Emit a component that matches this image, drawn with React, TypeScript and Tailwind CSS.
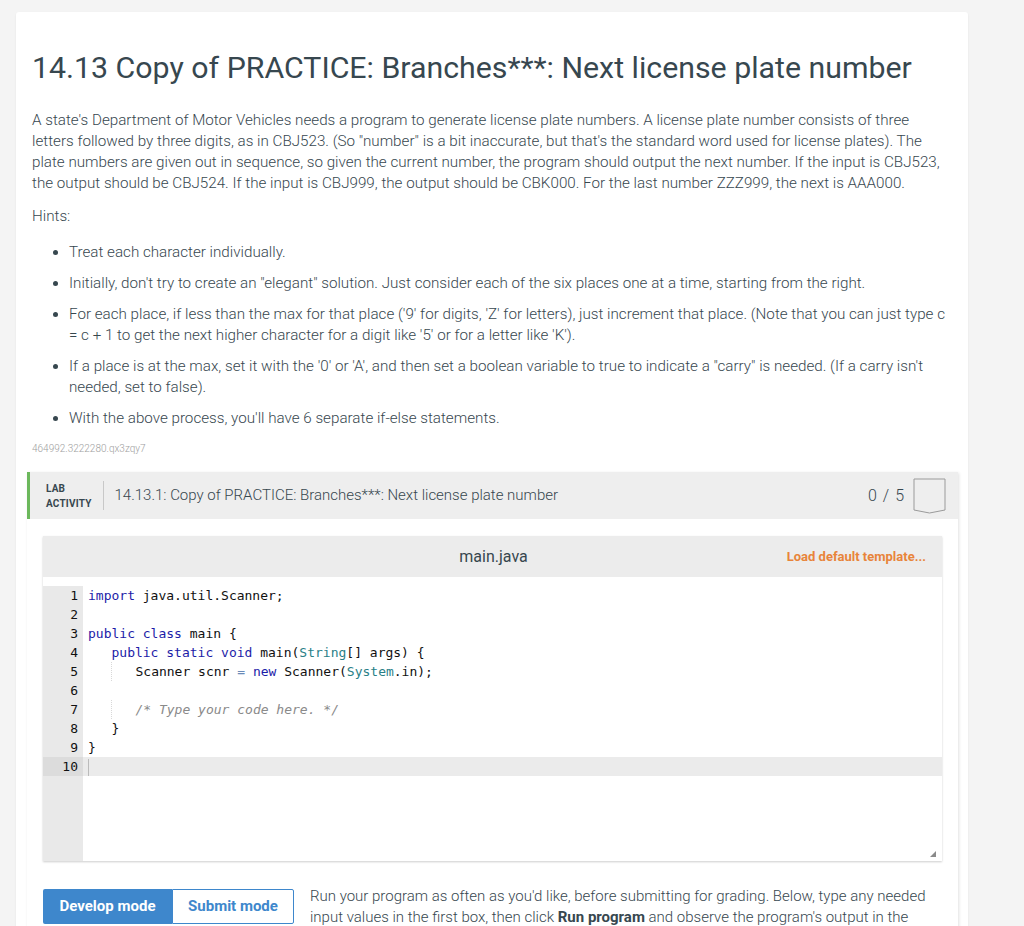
import React from 'react';

const kw = 'text-[#1c1ca8]';
const ty = 'text-[#2a7f87]';

const CodeLine: React.FC<{ n: number; active?: boolean; children?: React.ReactNode }> = ({ n, active, children }) => (
  <div className={`flex h-[19px] items-center ${active ? 'bg-[#ebebeb]' : ''}`}>
    <div className={`w-[40px] shrink-0 h-full pr-[5px] text-right leading-[19px] ${active ? 'bg-[#dcdcdc]' : 'bg-[#e9e9e9]'}`}>
      {n}
    </div>
    <div className="pl-[5px] whitespace-pre leading-[19px] relative h-full flex-1">{children}</div>
  </div>
);

const Guide = () => <span className="inline-block w-[24px] h-[19px] align-top border-l border-dotted border-[#d8d8d8]" />;

export default function App() {
  const hints = [
    'Treat each character individually.',
    'Initially, don\'t try to create an "elegant" solution. Just consider each of the six places one at a time, starting from the right.',
    "For each place, if less than the max for that place ('9' for digits, 'Z' for letters), just increment that place. (Note that you can just type c = c + 1 to get the next higher character for a digit like '5' or for a letter like 'K').",
    'If a place is at the max, set it with the \'0\' or \'A\', and then set a boolean variable to true to indicate a "carry" is needed. (If a carry isn\'t needed, set to false).',
    "With the above process, you'll have 6 separate if-else statements.",
  ];

  return (
    <div className="min-h-[926px] bg-[#f4f4f4] pt-[12px] font-['Roboto',sans-serif]">
      <div className="ml-[16px] w-[952px] bg-white rounded-[3px] shadow-[0_1px_2px_rgba(0,0,0,0.08)] pt-[38px] pb-10">
        <h1 className="px-4 text-[30.3px] leading-[36px] text-[#37474f] font-normal">
          14.13 Copy of PRACTICE: Branches***: Next license plate number
        </h1>
        <div className="pl-4 pr-[20px] mt-[24px] text-[15.2px] leading-[21px] font-light text-[#37474f]">
          <p>
            A state's Department of Motor Vehicles needs a program to generate license plate numbers. A license plate number consists of three letters followed by three digits, as in CBJ523. (So "number" is a bit inaccurate, but that's the standard word used for license plates). The plate numbers are given out in sequence, so given the current number, the program should output the next number. If the input is CBJ523, the output should be CBJ524. If the input is CBJ999, the output should be CBK000. For the last number ZZZ999, the next is AAA000.
          </p>
          <p className="mt-[12px]">Hints:</p>
          <ul className="mt-[15px] pl-[37px] list-disc marker:text-[#37474f]">
            {hints.map((h, i) => (
              <li key={i} className="mb-[10px]">{h}</li>
            ))}
          </ul>
          <div className="mt-[14px] text-[10px] leading-[12px] text-[#9e9e9e]">464992.3222280.qx3zqy7</div>
        </div>

        <div className="mt-[17px] ml-[11px] mr-[10px] shadow-[1px_1px_3px_rgba(0,0,0,0.12)]">
          <div className="h-[47px] bg-[#eeeeee] border-l-[3px] border-[#6cb85c] flex items-center pl-[16px] pr-[12px]">
            <div className="text-[10px] leading-[15px] font-bold text-[#37474f] tracking-[0.2px]">
              LAB
              <br />
              ACTIVITY
            </div>
            <div className="w-px h-[29px] bg-[#c8c8c8] ml-[11px] mr-[11px]" />
            <div className="text-[15px] font-light text-[#37474f]">
              14.13.1: Copy of PRACTICE: Branches***: Next license plate number
            </div>
            <div className="ml-auto flex items-center">
              <span className="text-[16px] text-[#37474f] font-light tracking-[1px]">0 / 5</span>
              <svg width="33" height="36" viewBox="0 0 33 36" className="ml-[8px]">
                <path d="M1 1 H32 V32 L16.5 35 L1 32 Z" fill="#eeeeee" stroke="#9a9a9a" strokeWidth="1" />
              </svg>
            </div>
          </div>

          <div className="bg-white px-4 pt-[17px] pb-[40px]">
            <div className="shadow-[0_1px_2px_rgba(0,0,0,0.2)]">
              <div className="h-[41px] bg-[#ececec] flex items-center relative">
                <div className="flex-1 text-center text-[16px] text-[#37474f] pl-[2px]">main.java</div>
                <div className="absolute right-[16px] text-[13px] font-bold text-[#e8843a]">Load default template...</div>
              </div>
              <div className="h-[284px] bg-white flex flex-col font-['DejaVu_Sans_Mono',monospace] text-[13px] text-[#111]">
                <div className="flex flex-col pt-[9px]">
                  <CodeLine n={1}><span className={kw}>import</span> java.util.Scanner;</CodeLine>
                  <CodeLine n={2} />
                  <CodeLine n={3}><span className={kw}>public</span> <span className={kw}>class</span> main {'{'}</CodeLine>
                  <CodeLine n={4}>{'   '}<span className={kw}>public</span> <span className={kw}>static</span> <span className={kw}>void</span> main(<span className={ty}>String</span>[] args) {'{'}</CodeLine>
                  <CodeLine n={5}>{'   '}<Guide />Scanner scnr <span className="text-[#6a8ab8]">=</span> <span className={kw}>new</span> Scanner(<span className={ty}>System</span>.in);</CodeLine>
                  <CodeLine n={6} />
                  <CodeLine n={7}>{'   '}<Guide /><span className="italic text-[#8a8a8a]">/* Type your code here. */</span></CodeLine>
                  <CodeLine n={8}>{'   '}{'}'}</CodeLine>
                  <CodeLine n={9}>{'}'}</CodeLine>
                  <CodeLine n={10} active><span className="inline-block w-px h-[17px] bg-[#bbb] align-middle" /></CodeLine>
                </div>
                <div className="flex-1 flex relative">
                  <div className="w-[40px] bg-[#e9e9e9]" />
                  <svg width="6" height="6" viewBox="0 0 6 6" className="absolute right-[6px] bottom-[4px]">
                    <path d="M6 0 L6 6 L0 6 Z" fill="#8a8a8a" />
                  </svg>
                </div>
              </div>
            </div>

            <div className="mt-[28px] flex items-start">
              <div className="flex shrink-0">
                <div className="w-[129px] h-[35px] bg-[#3e87cc] text-white text-[15px] font-bold flex items-center justify-center rounded-l-[2px]">
                  Develop mode
                </div>
                <div className="w-[122px] h-[35px] bg-white text-[#3e87cc] text-[15px] font-bold flex items-center justify-center border border-[#3e87cc] rounded-r-[2px]">
                  Submit mode
                </div>
              </div>
              <p className="ml-[16px] -mt-[3px] text-[15px] leading-[21px] font-light text-[#37474f] w-[630px]">
                Run your program as often as you'd like, before submitting for grading. Below, type any needed input values in the first box, then click <span className="font-bold">Run program</span> and observe the program's output in the second box.
              </p>
            </div>
          </div>
        </div>
      </div>
    </div>
  );
}
